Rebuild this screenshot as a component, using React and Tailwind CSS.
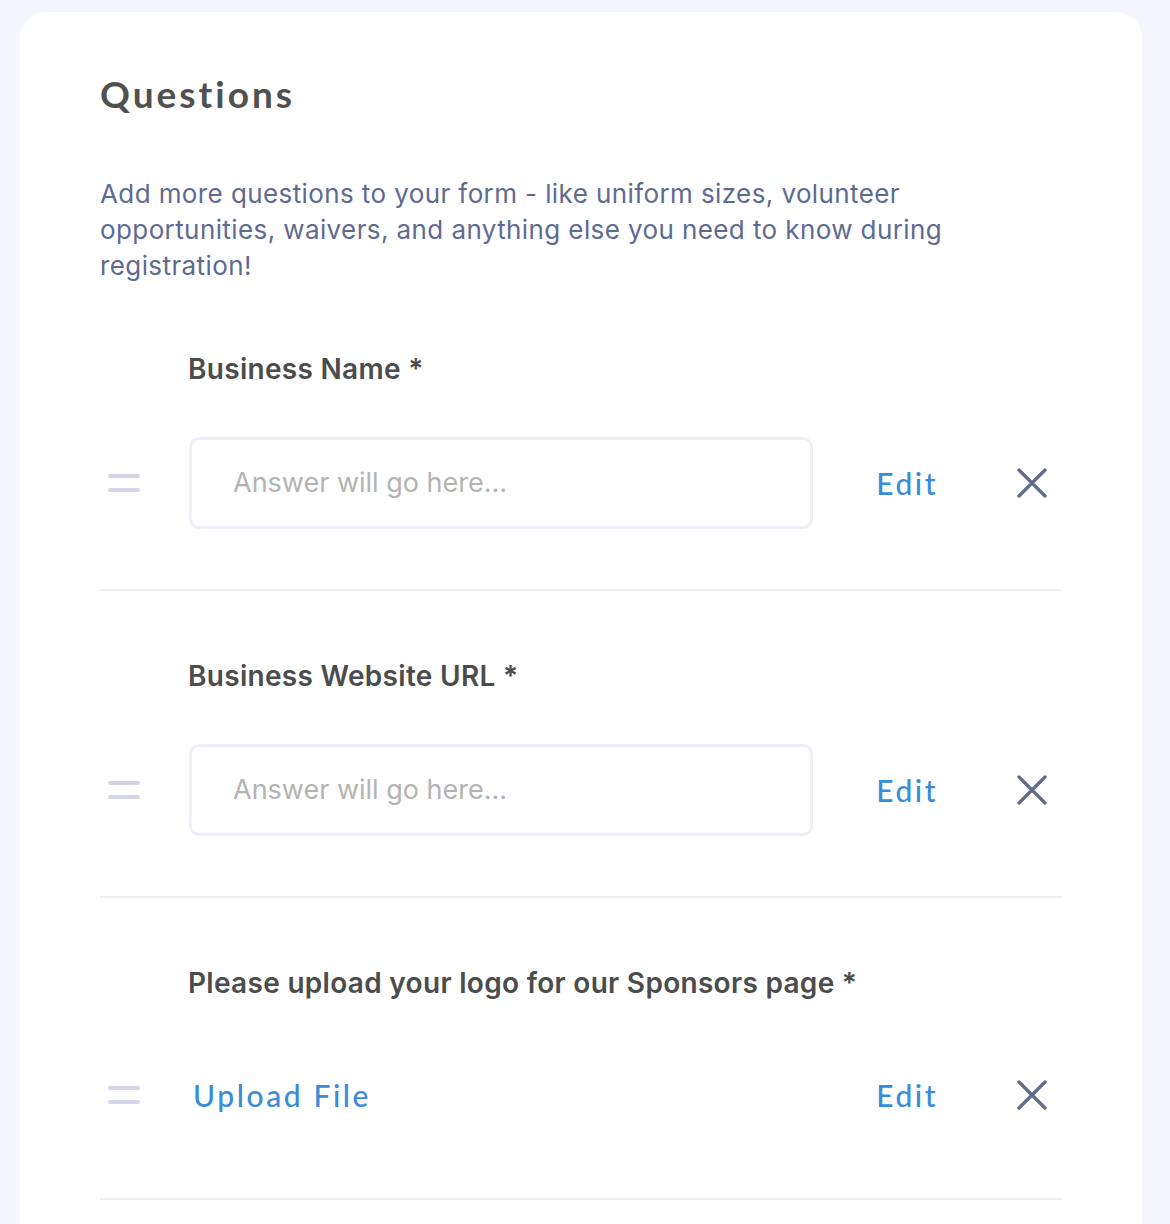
import React from 'react';

const questions = [
  { id: 1, label: 'Business Name *', type: 'text' },
  { id: 2, label: 'Business Website URL *', type: 'text' },
  { id: 3, label: 'Please upload your logo for our Sponsors page *', type: 'file' },
];

const DragHandle = () => (
  <div className="flex flex-col gap-[10px] w-8">
    <span className="block h-[4px] w-8 rounded-full bg-[#d3d4e6]" />
    <span className="block h-[4px] w-8 rounded-full bg-[#d3d4e6]" />
  </div>
);

const CloseIcon = () => (
  <svg width="30" height="30" viewBox="0 0 30 30" fill="none">
    <path d="M2 2L28 28M28 2L2 28" stroke="#636b8c" strokeWidth="3.2" strokeLinecap="round" />
  </svg>
);

const QuestionRow = ({ question }) => {
  const isFile = question.type === 'file';
  return (
    <div className={`pt-[68px] border-b-2 border-[#eeeef5] ${isFile ? 'pb-[59px]' : 'pb-[60px]'}`}>
      <div className="pl-[88px] text-[28px] leading-[34px] font-semibold tracking-[0.3px] text-[#4c4c4c] font-['Inter',sans-serif]">
        {question.label}
      </div>
      <div className={`mt-[51px] flex items-center ${isFile ? 'h-[88px]' : 'h-[92px]'}`}>
        <div className="w-[89px] pl-2 flex items-center">
          <DragHandle />
        </div>
        {isFile ? (
          <div className="w-[624px] pl-[4px] text-[30px] font-medium tracking-[2.6px] text-[#3a8bd8] font-['Lato',sans-serif]">
            Upload File
          </div>
        ) : (
          <div className="w-[624px] h-full rounded-[10px] border-[3px] border-[#eeeff8] flex items-center pl-[41px] text-[27px] text-[#b3b3b3] font-['Inter',sans-serif]">
            Answer will go here...
          </div>
        )}
        <div className="flex-1 flex items-center justify-end pr-[15px]">
          <button className="text-[30px] font-medium tracking-[2.5px] text-[#3a8bd8] font-['Lato',sans-serif]">
            Edit
          </button>
          <button className="ml-[79px] flex items-center">
            <CloseIcon />
          </button>
        </div>
      </div>
    </div>
  );
};

export default function App() {
  return (
    <div className="min-h-screen bg-[#f4f5fe] px-5 pt-3">
      <div className="bg-white rounded-[26px] px-20 pt-[60px] pb-[120px] w-[1122px]">
        <h1 className="text-[37px] leading-[44px] font-bold tracking-[3px] text-[#505050] font-['Lato',sans-serif]">
          Questions
        </h1>
        <p className="mt-[60px] text-[26px] leading-[36px] tracking-[0.4px] text-[#5f6a93] font-['Inter',sans-serif] max-w-[900px]">
          Add more questions to your form - like uniform sizes, volunteer opportunities, waivers, and anything else you need to know during registration!
        </p>
        <div>
          {questions.map((q) => (
            <QuestionRow key={q.id} question={q} />
          ))}
        </div>
      </div>
    </div>
  );
}
